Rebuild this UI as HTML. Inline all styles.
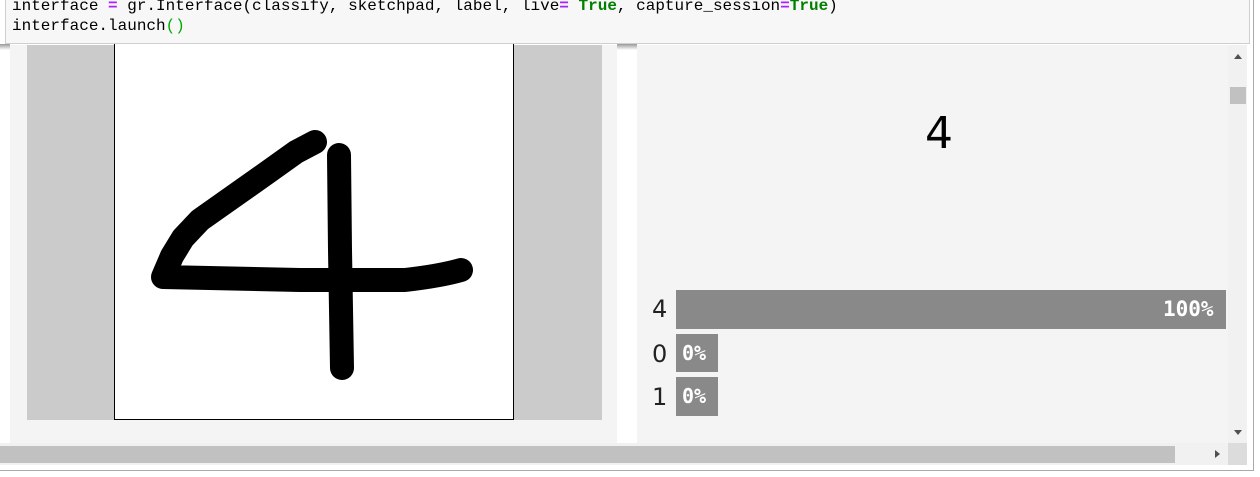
<!DOCTYPE html>
<html><head><style>
body{margin:0;width:1260px;height:477px;background:#fff;position:relative;overflow:hidden;font-family:"Liberation Sans",sans-serif}
.a{position:absolute}
.code{font-family:"Liberation Mono",monospace;font-size:16px;line-height:20px;color:#000}
</style></head><body>
<div class="a" style="left:5px;top:-2px;width:1243px;height:45px;background:#f7f7f7;border:1px solid #cfcfcf;border-top:none"></div>
<div class="a code" style="left:12px;top:-4px;white-space:pre">interface <b style="color:#aa22ff;font-weight:bold">=</b> gr.Interface(classify, sketchpad, label, live<b style="color:#aa22ff">=</b> <b style="color:#008000">True</b>, capture_session<b style="color:#aa22ff">=</b><b style="color:#008000">True</b>)
interface.launch<span style="color:#0a0">()</span></div>
<div class="a" style="left:0;top:44px;width:10px;height:6px;background:linear-gradient(#999,#fff)"></div>
<div class="a" style="left:10px;top:45px;width:607px;height:398px;background:#f4f4f4"></div>
<div class="a" style="left:27px;top:45px;width:575px;height:375px;background:#cbcbcb"></div>
<div class="a" style="left:114px;top:44px;width:398px;height:375px;background:#fff;border:1px solid #000;border-top:none"></div>
<svg class="a" style="left:0;top:0" width="1260" height="477">
<g fill="none" stroke="#000" stroke-width="24" stroke-linecap="round" stroke-linejoin="round">
<path d="M315 142 L296 152 L268 172 L200 220 L183 238 L172 256 L163 277 L300 280 L405 280 Q440 276 461 270"/>
<path d="M339 155 L340 250 L342 368"/>
</g></svg>
<div class="a" style="left:617px;top:44px;width:20px;height:6px;background:linear-gradient(#999,#fff)"></div>
<div class="a" style="left:637px;top:45px;width:591px;height:398px;background:#f4f4f4"></div>
<div class="a" style="left:925px;top:108px;font-size:44px;font-family:'DejaVu Sans',sans-serif">4</div>
<div class="a" style="left:652px;top:295px;font-size:24px;font-family:'DejaVu Sans',sans-serif;color:#222">4</div>
<div class="a" style="left:652px;top:340px;font-size:24px;font-family:'DejaVu Sans',sans-serif;color:#222">0</div>
<div class="a" style="left:652px;top:383px;font-size:24px;font-family:'DejaVu Sans',sans-serif;color:#222">1</div>
<div class="a" style="left:676px;top:290px;width:550px;height:39px;background:#898989"></div>
<div class="a" style="left:1163px;top:297px;color:#fff;font:bold 21px 'DejaVu Sans Mono',monospace">100%</div>
<div class="a" style="left:676px;top:334px;width:42px;height:38px;background:#898989;color:#fff;font:bold 20px 'DejaVu Sans Mono',monospace;line-height:38px;text-indent:6px">0%</div>
<div class="a" style="left:676px;top:377px;width:42px;height:39px;background:#898989;color:#fff;font:bold 20px 'DejaVu Sans Mono',monospace;line-height:39px;text-indent:6px">0%</div>
<div class="a" style="left:1228px;top:45px;width:19px;height:398px;background:#f1f1f1"></div>
<div class="a" style="left:1230px;top:87px;width:16px;height:17px;background:#c1c1c1"></div>
<div class="a" style="left:1234px;top:54px;width:0;height:0;border-left:4px solid transparent;border-right:4px solid transparent;border-bottom:5px solid #505050"></div>
<div class="a" style="left:1234px;top:430px;width:0;height:0;border-left:4px solid transparent;border-right:4px solid transparent;border-top:5px solid #505050"></div>
<div class="a" style="left:0;top:443px;width:1247px;height:22px;background:#f1f1f1"></div>
<div class="a" style="left:0;top:446px;width:1175px;height:17px;background:#c1c1c1"></div>
<div class="a" style="left:1215px;top:450px;width:0;height:0;border-top:4px solid transparent;border-bottom:4px solid transparent;border-left:5px solid #505050"></div>
<div class="a" style="left:1228px;top:443px;width:19px;height:22px;background:#dcdcdc"></div>
<div class="a" style="left:0;top:470px;width:1254px;height:1px;background:#aaa"></div>
<div class="a" style="left:1253px;top:0;width:1px;height:471px;background:#aaa"></div>
</body></html>
